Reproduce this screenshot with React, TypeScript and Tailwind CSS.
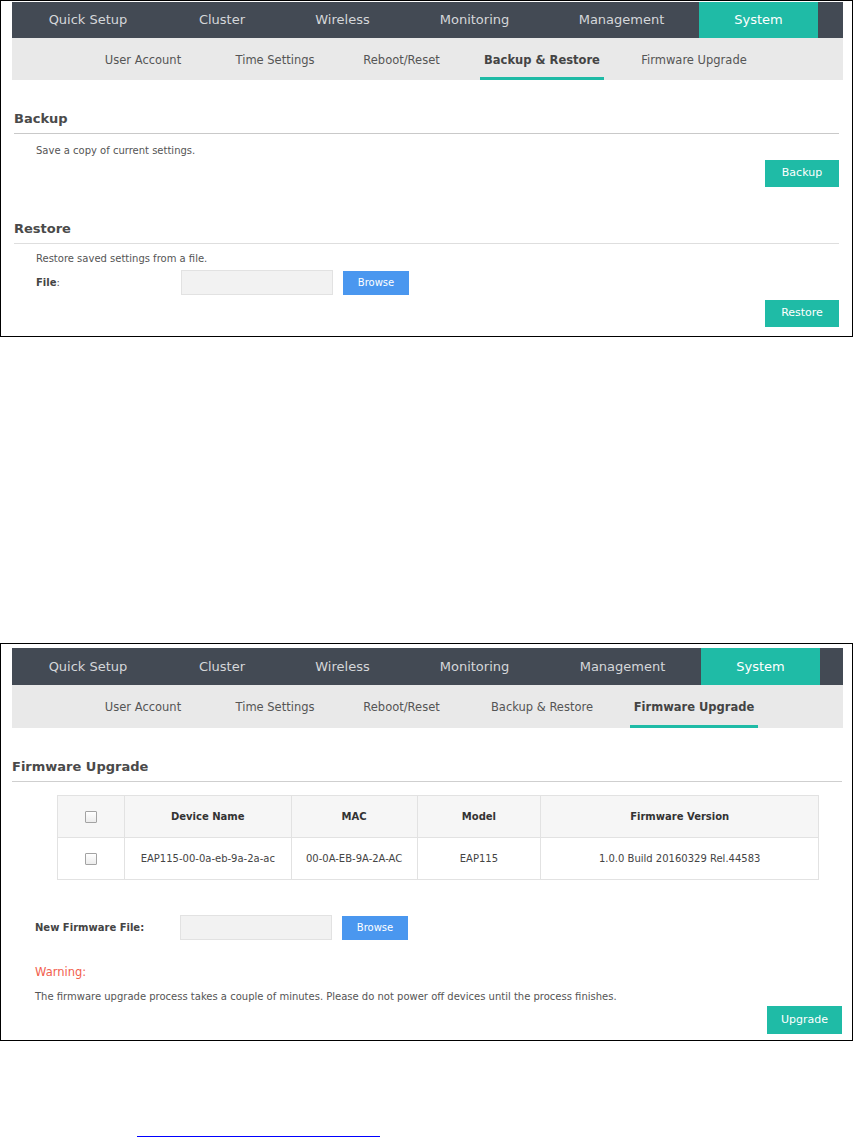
import React from "react";

const F = { fontFamily: '"DejaVu Sans", Verdana, sans-serif' };

function Nav({ h, widths }: { h: string; widths: number[] }) {
  const tabs = ["Quick Setup", "Cluster", "Wireless", "Monitoring", "Management", "System"];
  return (
    <div className={`flex bg-[#434a54] ${h}`}>
      {tabs.map((t, i) => (
        <div
          key={t}
          style={{ width: widths[i] }}
          className={`flex items-center justify-center text-[13px] ${
            t === "System" ? "bg-[#1fbba6] text-white" : "text-[#d5d7da]"
          }`}
        >
          {t}
        </div>
      ))}
      <div className="flex-1" />
    </div>
  );
}

function SubNav({ h, active }: { h: string; active: string }) {
  const items: [string, string][] = [
    ["User Account", "w-[132px]"],
    ["Time Settings", "w-[132px]"],
    ["Reboot/Reset", "w-[121px]"],
    ["Backup & Restore", "w-[160px]"],
    ["Firmware Upgrade", "w-[144px]"],
  ];
  return (
    <div className={`flex bg-[#e9e9e9] ${h}`}>
      <div className="w-[65px]" />
      {items.map(([t, w]) => (
        <div key={t} className={`flex justify-center ${w}`}>
          <span
            className={`flex items-center px-[4px] text-[11.5px] ${
              active === t
                ? "border-b-[3px] border-[#1fbba6] pt-[6px] font-bold text-[#444]"
                : "pt-[3px] text-[#555]"
            }`}
          >
            {t}
          </span>
        </div>
      ))}
    </div>
  );
}

function TealButton({ label, w, h }: { label: string; w: string; h: string }) {
  return (
    <div className={`flex items-center justify-center bg-[#1fbba6] text-[11px] text-white ${w} ${h}`}>
      {label}
    </div>
  );
}

function FileInput() {
  return (
    <>
      <div className="h-[25px] w-[152px] border border-[#e2e2e2] bg-[#f2f2f2]" />
      <div className="ml-[10px] flex h-[24px] w-[66px] items-center justify-center bg-[#4a97ef] text-[10px] text-white">
        Browse
      </div>
    </>
  );
}

function Checkbox() {
  return <div className="h-[12px] w-[12px] rounded-[1px] border border-[#a3a3a3] bg-gradient-to-b from-white to-[#ececec]" />;
}

export default function App() {
  return (
    <div className="bg-white text-[#555]" style={F}>
      {/* Frame 1 */}
      <div className="h-[337px] w-[853px] border border-black pl-[11px] pr-[9px] pt-[1px]">
        <Nav h="h-[36px]" widths={[152, 116, 125, 139, 155, 119]} />
        <SubNav h="h-[42px]" active="Backup & Restore" />
        <div className="pl-[2px] pr-[4px]">
          <div className="mt-[31px] border-b border-[#c9c9c9] pb-[6px] text-[13px] font-bold leading-[16px] text-[#4a4a4a]">
            Backup
          </div>
          <div className="mt-[10px] pl-[22px] text-[10px] leading-[14px]">Save a copy of current settings.</div>
          <div className="mt-[2px] flex justify-end">
            <TealButton label="Backup" w="w-[74px]" h="h-[27px]" />
          </div>
          <div className="mt-[34px] border-b border-[#dedede] pb-[6px] text-[13px] font-bold leading-[16px] text-[#4a4a4a]">
            Restore
          </div>
          <div className="mt-[8px] pl-[22px] text-[10px] leading-[14px]">Restore saved settings from a file.</div>
          <div className="mt-[4px] flex items-center pl-[22px]">
            <div className="w-[145px] text-[10px]">
              <span className="font-bold text-[#444]">File</span>:
            </div>
            <FileInput />
          </div>
          <div className="mt-[5px] flex justify-end">
            <TealButton label="Restore" w="w-[74px]" h="h-[27px]" />
          </div>
        </div>
      </div>

      {/* Frame 2 */}
      <div className="mt-[306px] h-[398px] w-[853px] border border-black pl-[11px] pr-[9px] pt-[4px]">
        <Nav h="h-[37px]" widths={[152, 116, 125, 139, 157, 119]} />
        <SubNav h="h-[43px]" active="Firmware Upgrade" />
        <div className="pr-[1px]">
          <div className="mt-[31px] border-b border-[#cfcfcf] pb-[6px] text-[13px] font-bold leading-[16px] text-[#4a4a4a]">
            Firmware Upgrade
          </div>
          <div className="ml-[45px] mt-[13px] w-[762px]">
            <table className="w-full border-collapse text-[10px]">
              <colgroup>
                <col className="w-[67px]" />
                <col className="w-[167px]" />
                <col className="w-[126px]" />
                <col className="w-[124px]" />
                <col className="w-[278px]" />
              </colgroup>
              <thead>
                <tr className="h-[42px] bg-[#f6f6f6] font-bold text-[#333]">
                  <th className="border border-[#e2e2e2]">
                    <div className="flex justify-center"><Checkbox /></div>
                  </th>
                  <th className="border border-[#e2e2e2]">Device Name</th>
                  <th className="border border-[#e2e2e2]">MAC</th>
                  <th className="border border-[#e2e2e2]">Model</th>
                  <th className="border border-[#e2e2e2]">Firmware Version</th>
                </tr>
              </thead>
              <tbody>
                <tr className="h-[42px] text-center text-[#444]">
                  <td className="border border-[#e2e2e2]">
                    <div className="flex justify-center"><Checkbox /></div>
                  </td>
                  <td className="border border-[#e2e2e2]">EAP115-00-0a-eb-9a-2a-ac</td>
                  <td className="border border-[#e2e2e2]">00-0A-EB-9A-2A-AC</td>
                  <td className="border border-[#e2e2e2]">EAP115</td>
                  <td className="border border-[#e2e2e2]">1.0.0 Build 20160329 Rel.44583</td>
                </tr>
              </tbody>
            </table>
          </div>
          <div className="mt-[35px] flex items-center pl-[23px]">
            <div className="w-[145px] text-[10px] font-bold text-[#444]">New Firmware File:</div>
            <FileInput />
          </div>
          <div className="mt-[25px] pl-[23px] text-[11.5px] leading-[14px] text-[#f2604e]">Warning:</div>
          <div className="mt-[11px] pl-[23px] text-[10px] leading-[14px]">
            The firmware upgrade process takes a couple of minutes. Please do not power off devices until the process finishes.
          </div>
          <div className="mt-[2px] flex justify-end">
            <TealButton label="Upgrade" w="w-[75px]" h="h-[28px]" />
          </div>
        </div>
      </div>

      <div className="ml-[137px] mt-[95px] h-[1px] w-[243px] bg-[#0000ff]" />
    </div>
  );
}
